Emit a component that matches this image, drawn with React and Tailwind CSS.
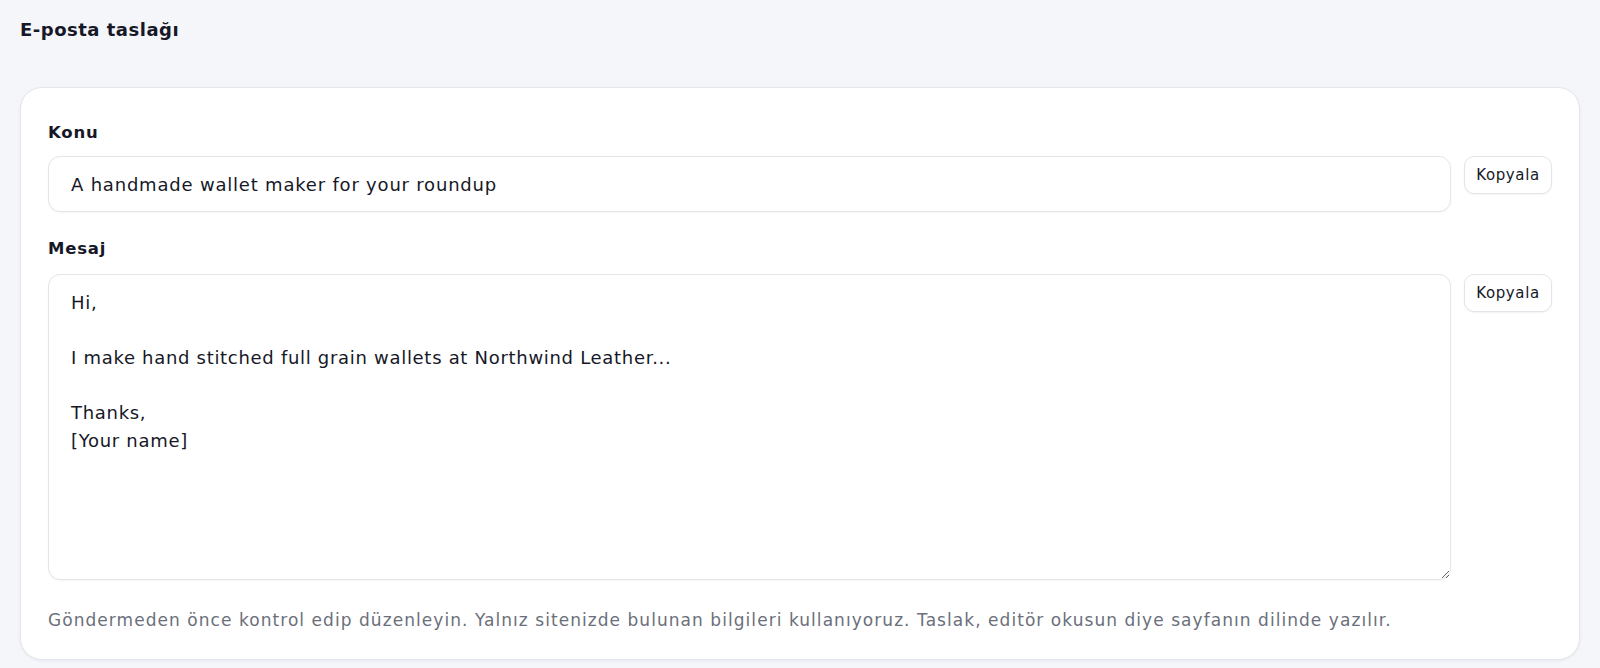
import React from "react";

export default function App() {
  const msg = "Hi,\n\nI make hand stitched full grain wallets at Northwind Leather...\n\nThanks,\n[Your name]";
  return (
    <div className="min-h-[668px] w-full bg-[#f5f6fa] px-5 pt-[17px] font-['DejaVu_Sans',sans-serif] text-[#161827]">
      <h2 className="text-[18px] font-bold leading-[26px] h-[26px] tracking-[0.5px]">E-posta taslağı</h2>
      <div className="mt-[44px] rounded-[22px] border border-[#e5e7ee] bg-white px-[27px] pt-[32px] pb-[27px] shadow-[0_1px_3px_rgba(20,24,40,0.06)]">
        <div className="text-[16.5px] font-bold leading-[26px] tracking-[0.8px]">Konu</div>
        <div className="mt-[10px] flex items-start gap-[13px]">
          <input
            readOnly
            value="A handmade wallet maker for your roundup"
            className="h-[56px] flex-1 rounded-[12px] border border-[#e3e5ea] bg-white px-[22px] text-[18px] tracking-[0.8px] text-[#161827] outline-none shadow-[0_1px_2px_rgba(0,0,0,0.04)]"
          />
          <button className="h-[38px] w-[88px] rounded-[10px] border border-[#e3e5ea] bg-white text-[15px] tracking-[0.6px] text-[#161827] shadow-[0_1px_2px_rgba(0,0,0,0.05)]">
            Kopyala
          </button>
        </div>
        <div className="mt-[24px] text-[16.5px] font-bold leading-[26px] tracking-[0.8px]">Mesaj</div>
        <div className="mt-[12px] flex items-start gap-[13px]">
          <textarea
            readOnly
            value={msg}
            className="h-[306px] flex-1 resize-y rounded-[12px] border border-[#e3e5ea] bg-white px-[22px] py-[14px] text-[18px] leading-[27.5px] tracking-[0.7px] text-[#161827] outline-none shadow-[0_1px_2px_rgba(0,0,0,0.04)]"
          />
          <button className="h-[38px] w-[88px] rounded-[10px] border border-[#e3e5ea] bg-white text-[15px] tracking-[0.6px] text-[#161827] shadow-[0_1px_2px_rgba(0,0,0,0.05)]">
            Kopyala
          </button>
        </div>
        <p className="mt-[28px] text-[17px] leading-[24px] tracking-[1.05px] text-[#6b6f7b]">
          Göndermeden önce kontrol edip düzenleyin. Yalnız sitenizde bulunan bilgileri kullanıyoruz. Taslak, editör okusun diye sayfanın dilinde yazılır.
        </p>
      </div>
    </div>
  );
}
